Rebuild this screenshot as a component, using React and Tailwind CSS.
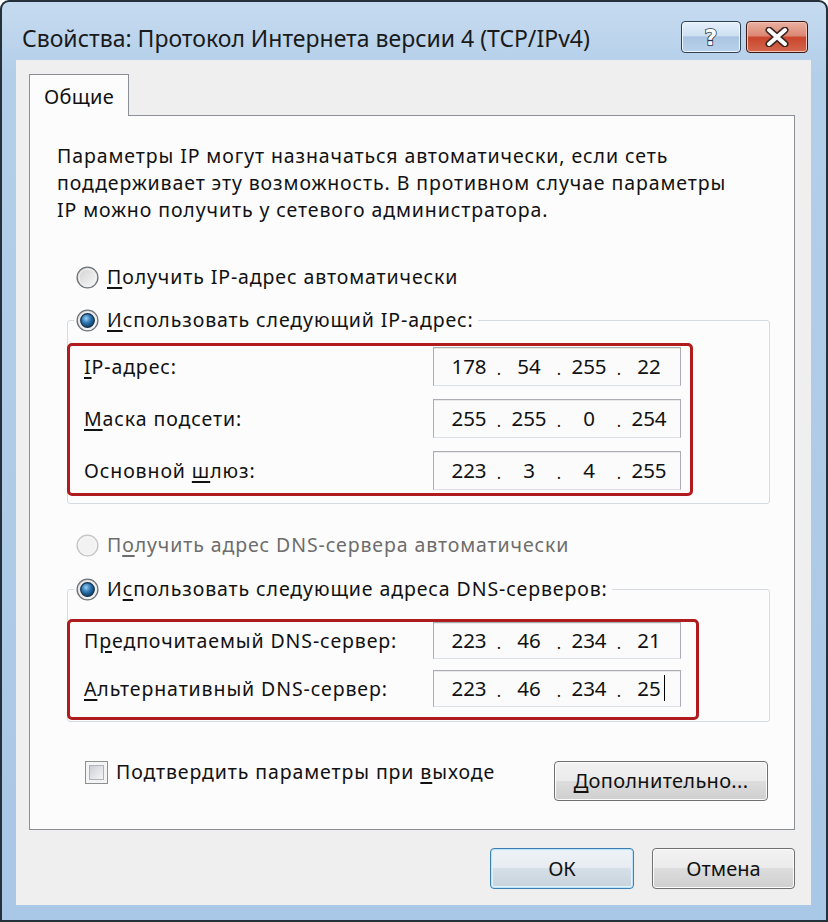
import React from "react";

const T = "text-[19.5px] tracking-[0.9px]";

function Radio({ checked, disabled }) {
  return (
    <svg width="23" height="23" viewBox="0 0 23 23" className="shrink-0">
      <defs>
        <linearGradient id="rbg" x1="0" y1="0" x2="1" y2="1">
          <stop offset="0" stopColor="#cfcfcf" />
          <stop offset="1" stopColor="#fbfbfb" />
        </linearGradient>
        <radialGradient id="rdot" cx="0.4" cy="0.35" r="0.7">
          <stop offset="0" stopColor="#9fd0f2" />
          <stop offset="0.45" stopColor="#2f7bb8" />
          <stop offset="1" stopColor="#0c3558" />
        </radialGradient>
      </defs>
      <circle
        cx="11.5"
        cy="11.5"
        r="10.4"
        fill={disabled ? "#f2f2f2" : "url(#rbg)"}
        stroke={disabled ? "#c4c4c4" : "#6f747a"}
        strokeWidth="1.3"
      />
      <circle cx="11.5" cy="11.5" r="8.4" fill="none" stroke={disabled ? "#f7f7f7" : "#f4f4f4"} strokeWidth="1" />
      {checked && <circle cx="11.5" cy="11.5" r="6.8" fill="url(#rdot)" stroke="#14324f" strokeWidth="1.2" />}
    </svg>
  );
}

function U({ children }) {
  return <span className="underline underline-offset-[3px] decoration-[1.5px]">{children}</span>;
}

function IpField({ parts, cursor }) {
  return (
    <div className="w-[248px] h-full border border-[#abadb3] border-b-[#dbdfe6] bg-[#fbfbfb] flex items-center pl-[9px] text-[20.5px] text-[#111] shadow-[inset_0_1px_0_#e9e9e9]">
      {parts.map((p, i) => (
        <React.Fragment key={i}>
          {i > 0 && <span className="w-[8px] text-center text-[16px] translate-y-[2px]">.</span>}
          <span className="w-[52px] text-center relative">
            {p}
            {cursor && i === 3 && <span className="absolute right-[10px] top-[2px] w-[1.5px] h-[26px] bg-black" />}
          </span>
        </React.Fragment>
      ))}
    </div>
  );
}

function Row({ label, parts, h, cursor }) {
  return (
    <div className={`flex items-center ${h}`}>
      <div className={`w-[363px] pl-[14px] ${T}`}>{label}</div>
      <IpField parts={parts} cursor={cursor} />
    </div>
  );
}

function WinButton({ children, focused, className }) {
  return (
    <div
      className={`flex items-center justify-center rounded-[4px] border text-[20px] text-[#111] ${
        focused
          ? "border-[#3c7fb1] bg-[linear-gradient(to_bottom,#eef3f7_0%,#e6ecf1_49%,#d6dfe6_50%,#c8d3dc_100%)] shadow-[inset_0_0_0_1px_#bfe3f7,inset_0_0_0_2px_#e2f2fb]"
          : "border-[#707070] bg-[linear-gradient(to_bottom,#f2f2f2_0%,#ebebeb_49%,#dddddd_50%,#cfcfcf_100%)] shadow-[inset_0_0_0_1px_#fcfcfc]"
      } ${className}`}
    >
      {children}
    </div>
  );
}

export default function App() {
  return (
    <div className="w-[828px] h-[922px] bg-white font-['Noto_Sans',sans-serif] text-[#111]">
      <div className="w-full h-full rounded-t-[9px] border-2 border-[#25303a] bg-[linear-gradient(to_bottom,#c6dbf0_0%,#b3cee9_8%,#a9c7e6_100%)] flex flex-col">
        {/* Title bar */}
        <div className="h-[58px] shrink-0 flex items-center pt-[14px] pl-[20px] pr-[18px]">
          <div className="flex-1 text-[23px] tracking-[0px] text-[#1a1a1a]">
            Свойства: Протокол Интернета версии 4 (TCP/IPv4)
          </div>
          <div className="flex items-center gap-[5px] -translate-y-[1px]">
            <div className="w-[60px] h-[32px] rounded-[4px] border border-[#2f4156] bg-[linear-gradient(to_bottom,#e6f0fa_0%,#cfe0f2_45%,#aac5e2_50%,#b9d2ec_100%)] shadow-[inset_0_0_0_1px_#eef5fc] flex items-center justify-center">
              <svg width="24" height="28" viewBox="0 0 24 28">
                <text
                  x="12"
                  y="22"
                  textAnchor="middle"
                  fontFamily="DejaVu Sans, sans-serif"
                  fontWeight="bold"
                  fontSize="22"
                  fill="#ffffff"
                  stroke="#2a3440"
                  strokeWidth="1.6"
                  paintOrder="stroke"
                >
                  ?
                </text>
              </svg>
            </div>
            <div className="w-[62px] h-[32px] rounded-[4px] border border-[#3b1710] bg-[linear-gradient(to_bottom,#eab1a2_0%,#dc8873_45%,#c9462d_52%,#d5674d_100%)] shadow-[inset_0_0_0_1px_#f1c3b6] flex items-center justify-center">
              <svg width="26" height="20" viewBox="0 0 26 20">
                <path d="M5 3 L21 17 M21 3 L5 17" stroke="#3a2520" strokeWidth="7" strokeLinecap="round" />
                <path d="M5 3 L21 17 M21 3 L5 17" stroke="#ffffff" strokeWidth="4" strokeLinecap="round" />
              </svg>
            </div>
          </div>
        </div>

        {/* Client area */}
        <div className="ml-[14px] mr-[15px] h-[845px] shrink-0 bg-[#efefef] pl-[13px] pr-[16px] flex flex-col">
          {/* Tab */}
          <div className="mt-[14px] flex">
            <div className="relative z-10 -mb-[1px] w-[100px] h-[42px] border border-b-0 border-[#8c9096] bg-[#fcfcfc] pl-[14px] pt-[7px] text-[20px] tracking-[0.3px]">
              Общие
            </div>
          </div>
          {/* Panel */}
          <div className="h-[715px] border border-[#8c9096] bg-[#fcfcfc] flex flex-col">
            <p className={`pl-[27px] pt-[26px] leading-[27px] ${T}`}>
              Параметры IP могут назначаться автоматически, если сеть
              <br />
              поддерживает эту возможность. В противном случае параметры
              <br />
              IP можно получить у сетевого администратора.
            </p>

            <div className={`mt-[40px] ml-[46px] h-[28px] flex items-center gap-[8px] ${T}`}>
              <Radio />
              <span>
                <U>П</U>олучить IP-адрес автоматически
              </span>
            </div>

            <fieldset className="mt-[15px] ml-[37px] w-[703px] border border-[#d5dbe0] rounded-[3px] pb-[7px]">
              <legend className="ml-[6px] px-[2px] pr-[4px] h-[28px]">
                <div className={`h-[28px] flex items-center gap-[8px] ${T}`}>
                  <Radio checked />
                  <span>
                    <U>И</U>спользовать следующий IP-адрес:
                  </span>
                </div>
              </legend>
              <div className="mt-[9px] -ml-[1px] w-[626px] border-[3px] border-[#b01b1e] rounded-[5px] pt-[1px] pb-[3px] flex flex-col gap-[13px]">
                <Row
                  h="h-[39px]"
                  label={
                    <>
                      <U>I</U>P-адрес:
                    </>
                  }
                  parts={["178", "54", "255", "22"]}
                />
                <Row
                  h="h-[39px]"
                  label={
                    <>
                      <U>М</U>аска подсети:
                    </>
                  }
                  parts={["255", "255", "0", "254"]}
                />
                <Row
                  h="h-[39px]"
                  label={
                    <>
                      Основной <U>ш</U>люз:
                    </>
                  }
                  parts={["223", "3", "4", "255"]}
                />
              </div>
            </fieldset>

            <div className={`mt-[27px] ml-[46px] h-[28px] flex items-center gap-[8px] text-[#6d6d6d] ${T}`}>
              <Radio disabled />
              <span>
                П<U>о</U>лучить адрес DNS-сервера автоматически
              </span>
            </div>

            <fieldset className="mt-[16px] ml-[37px] w-[703px] border border-[#d5dbe0] rounded-[3px] pb-[1px]">
              <legend className="ml-[6px] px-[2px] pr-[4px] h-[28px]">
                <div className={`h-[28px] flex items-center gap-[8px] ${T}`}>
                  <Radio checked />
                  <span>
                    И<U>с</U>пользовать следующие адреса DNS-серверов:
                  </span>
                </div>
              </legend>
              <div className="mt-[16px] -ml-[1px] w-[632px] border-[3px] border-[#b01b1e] rounded-[5px] pb-[10px] flex flex-col gap-[11px]">
                <Row
                  h="h-[37px]"
                  label={
                    <>
                      П<U>р</U>едпочитаемый DNS-сервер:
                    </>
                  }
                  parts={["223", "46", "234", "21"]}
                />
                <Row
                  h="h-[37px]"
                  label={
                    <>
                      <U>А</U>льтернативный DNS-сервер:
                    </>
                  }
                  parts={["223", "46", "234", "25"]}
                  cursor
                />
              </div>
            </fieldset>

            <div className="mt-[38px] flex items-start justify-between pl-[55px] pr-[26px]">
              <div className={`flex items-center gap-[8px] h-[24px] ${T}`}>
                <div className="w-[23px] h-[23px] border border-[#8e8f8f] bg-[#f4f4f4] p-[3px]">
                  <div className="w-full h-full border border-[#aeb3b9] bg-[linear-gradient(135deg,#cbcfd5_0%,#f6f6f6_100%)]" />
                </div>
                <span>
                  Подтвердить параметры при <U>в</U>ыходе
                </span>
              </div>
              <WinButton className="w-[214px] h-[40px] mt-[1px] tracking-[0.3px]">
                <span>
                  <U>Д</U>ополнительно...
                </span>
              </WinButton>
            </div>
          </div>

          {/* Bottom buttons */}
          <div className="mt-[18px] flex justify-end gap-[18px]">
            <WinButton focused className="w-[144px] h-[41px]">
              ОК
            </WinButton>
            <WinButton className="w-[143px] h-[41px]">Отмена</WinButton>
          </div>
        </div>
      </div>
    </div>
  );
}
